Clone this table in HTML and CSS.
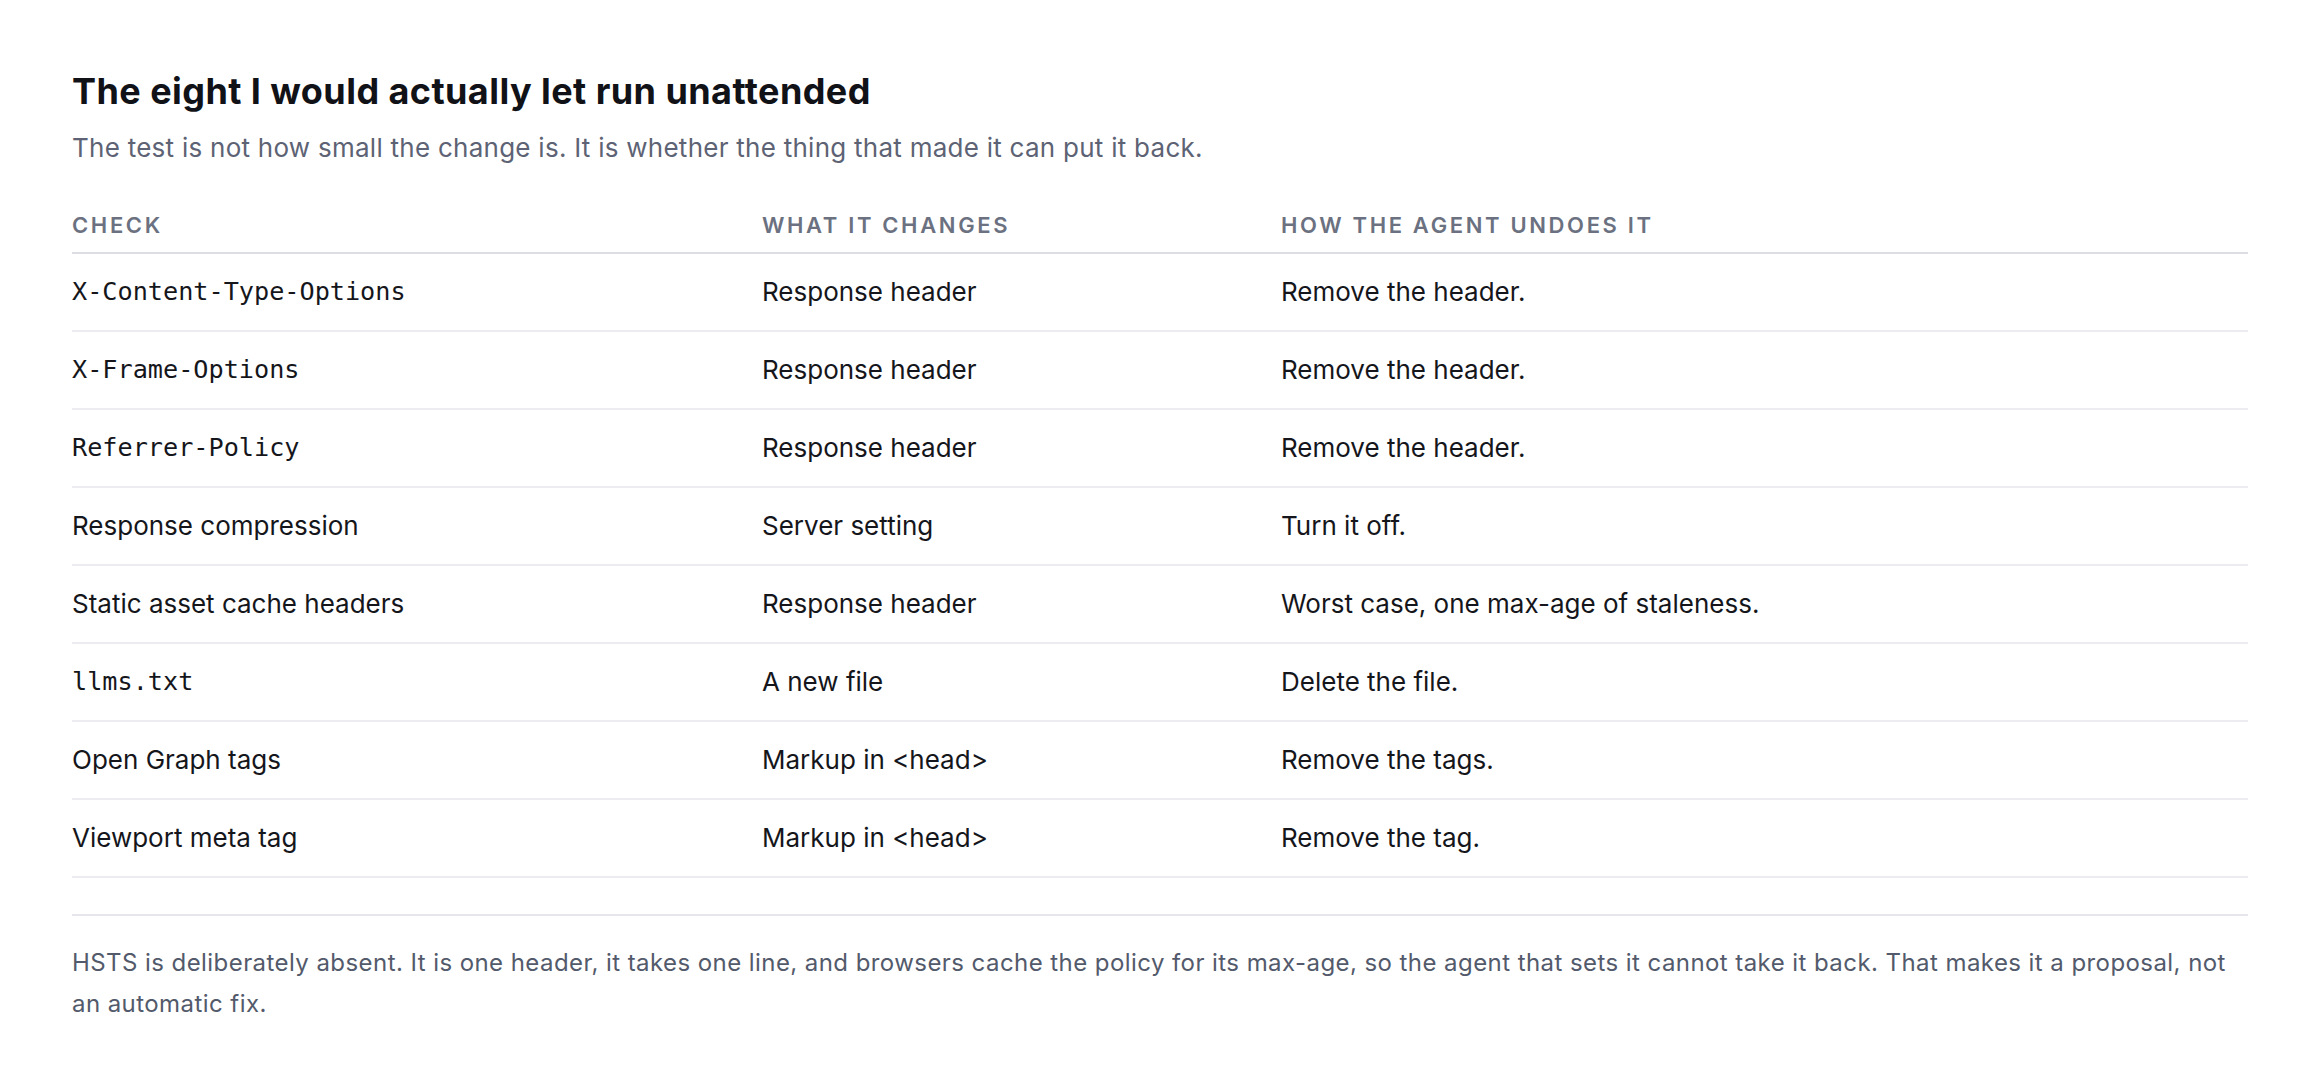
FILE: index.html
```html
<!DOCTYPE html>
<html lang="en">
<head>
<meta charset="utf-8">
<title>The eight I would actually let run unattended</title>
<link rel="stylesheet" href="styles.css">
</head>
<body>
<main class="page">
  <h2 class="title">The eight I would actually let run unattended</h2>
  <p class="subtitle">The test is not how small the change is. It is whether the thing that made it can put it back.</p>
  <table class="checks">
    <colgroup>
      <col class="col-check">
      <col class="col-change">
      <col class="col-undo">
    </colgroup>
    <thead>
      <tr><th>Check</th><th>What it changes</th><th>How the agent undoes it</th></tr>
    </thead>
    <tbody>
      <tr><td class="mono">X-Content-Type-Options</td><td>Response header</td><td>Remove the header.</td></tr>
      <tr><td class="mono">X-Frame-Options</td><td>Response header</td><td>Remove the header.</td></tr>
      <tr><td class="mono">Referrer-Policy</td><td>Response header</td><td>Remove the header.</td></tr>
      <tr><td>Response compression</td><td>Server setting</td><td>Turn it off.</td></tr>
      <tr><td>Static asset cache headers</td><td>Response header</td><td>Worst case, one max-age of staleness.</td></tr>
      <tr><td class="mono">llms.txt</td><td>A new file</td><td>Delete the file.</td></tr>
      <tr><td>Open Graph tags</td><td>Markup in &lt;head&gt;</td><td>Remove the tags.</td></tr>
      <tr><td>Viewport meta tag</td><td>Markup in &lt;head&gt;</td><td>Remove the tag.</td></tr>
    </tbody>
  </table>
  <p class="note">HSTS is deliberately absent. It is one header, it takes one line, and browsers cache the policy for its max-age, so the agent that sets it cannot take it back. That makes it a proposal, not an automatic fix.</p>
</main>
</body>
</html>
```
FILE: styles.css
```css
html, body {
  margin: 0;
  padding: 0;
  background: #ffffff;
}

body {
  font-family: Inter, "Noto Sans", "Liberation Sans", sans-serif;
  color: #15161b;
}

.page {
  padding: 69px 72px 0 72px;
}

.title {
  margin: 0;
  font-size: 36px;
  line-height: 44px;
  font-weight: 700;
  letter-spacing: 0.012em;
  color: #111217;
}

.subtitle {
  margin: 15px 0 0 0;
  font-size: 26px;
  line-height: 40px;
  letter-spacing: 0.01em;
  color: #5d6374;
}

.checks {
  margin-top: 29px;
  width: 100%;
  border-collapse: collapse;
  table-layout: fixed;
}

.col-check { width: 690px; }
.col-change { width: 519px; }

.checks th {
  text-align: left;
  padding: 12px 0 11px 0;
  font-size: 22px;
  line-height: 32px;
  font-weight: 600;
  letter-spacing: 0.12em;
  text-transform: uppercase;
  color: #6b7180;
  border-bottom: 2px solid #dcdde5;
}

.checks td {
  padding: 18px 0;
  font-size: 26px;
  line-height: 40px;
  color: #15161b;
  border-bottom: 2px solid #ececf1;
  vertical-align: middle;
}

.checks td.mono {
  font-family: "DejaVu Sans Mono", "Liberation Mono", monospace;
  font-size: 25.2px;
}

.note {
  margin: 36px 0 0 0;
  padding-top: 26px;
  border-top: 2px solid #e6e6ec;
  font-size: 24px;
  line-height: 41px;
  letter-spacing: 0.018em;
  color: #535a6b;
}
```
